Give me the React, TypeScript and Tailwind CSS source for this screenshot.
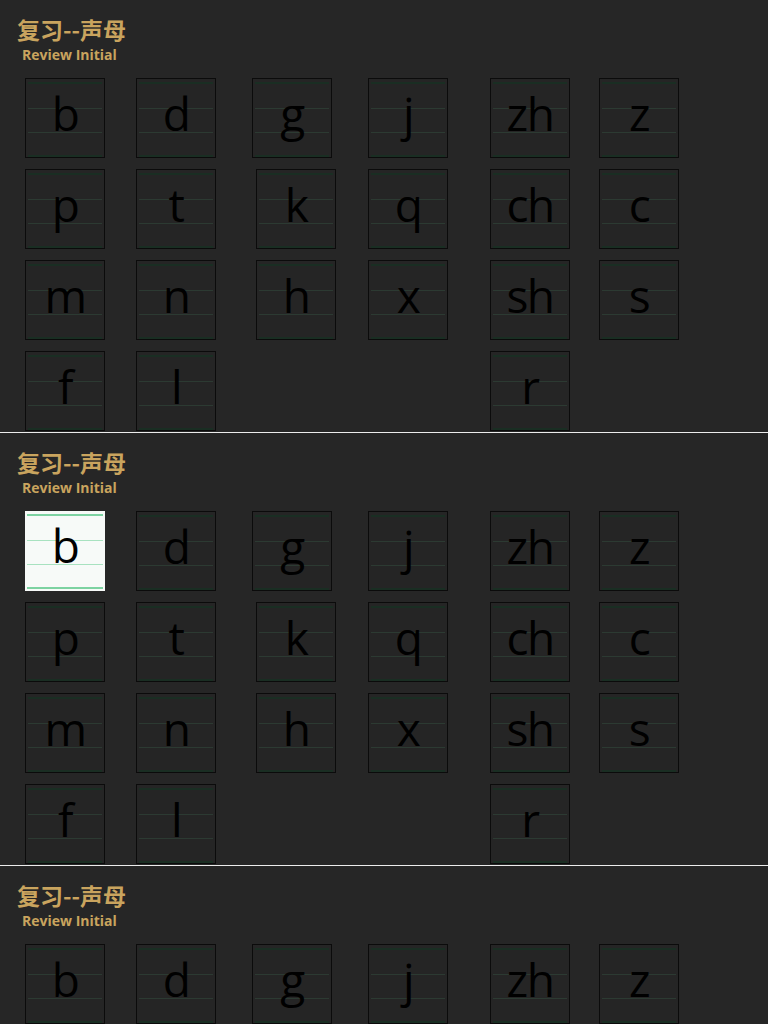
import React from 'react';

const rows: string[][] = [
  ['b', 'd', 'g', 'j', 'zh', 'z'],
  ['p', 't', 'k', 'q', 'ch', 'c'],
  ['m', 'n', 'h', 'x', 'sh', 's'],
  ['f', 'l', '', '', 'r', ''],
];

function LetterCard({ letter, active, shifted }: { letter: string; active?: boolean; shifted?: boolean }) {
  const edge = active ? 'bg-[#7dd3a2]' : 'bg-[#1a2e23]';
  const mid = active ? 'bg-[#a8e2c0]' : 'bg-[#2c3a32]';
  return (
    <div
      className={`relative w-[80px] h-[80px] ${shifted ? 'ml-[4px]' : ''} ${
        active ? 'bg-[#f7faf8]' : 'bg-[#252525] border border-[#0b0b0b]'
      }`}
    >
      <div className="flex flex-col h-full px-[2px]">
        <div className={`mt-[3px] h-[2px] ${edge}`} />
        <div className={`mt-[24px] h-px ${mid}`} />
        <div className={`mt-[23px] h-px ${mid}`} />
        <div className={`mt-[22px] h-[2px] ${edge}`} />
      </div>
      <div className="absolute inset-x-0 top-[11px] text-center text-[46px] leading-[46px] tracking-[-1.5px] text-black font-['Open_Sans',sans-serif]">
        {letter}
      </div>
    </div>
  );
}

function Panel({ highlight }: { highlight?: boolean }) {
  return (
    <div className="h-[433px] border-b border-[#ececec] bg-[#262626] overflow-hidden">
      <div className="pl-[17px] pt-[18px]">
        <div className="text-[23px] leading-[23px] font-bold text-[#c9a45e] font-['Noto_Sans_CJK_SC',sans-serif]">
          复习--声母
        </div>
        <div className="mt-[6px] pl-[5px] text-[14px] leading-[15px] font-bold text-[#c9a45e] font-['Open_Sans',sans-serif]">
          Review Initial
        </div>
      </div>
      <div className="mt-[16px] pl-[25px] grid grid-cols-[111px_116px_116px_122px_109px_80px] gap-y-[11px]">
        {rows.map((row, r) =>
          row.map((letter, c) =>
            letter ? (
              <LetterCard
                key={`${r}-${c}`}
                letter={letter}
                active={highlight && r === 0 && c === 0}
                shifted={c === 2 && r > 0}
              />
            ) : (
              <div key={`${r}-${c}`} className="h-[80px]" />
            )
          )
        )}
      </div>
    </div>
  );
}

export default function App() {
  return (
    <div className="min-h-screen bg-[#262626]">
      <Panel />
      <Panel highlight />
      <Panel />
    </div>
  );
}
